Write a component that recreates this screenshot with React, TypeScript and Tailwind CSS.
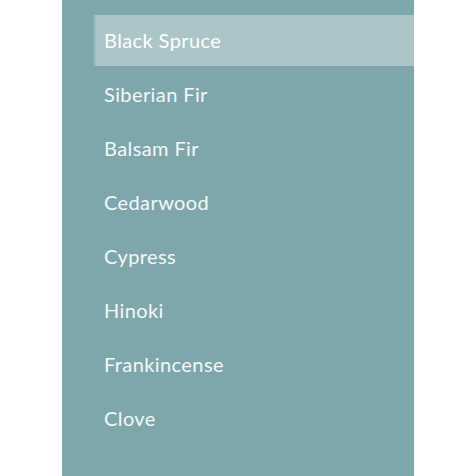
const items = [
  'Black Spruce',
  'Siberian Fir',
  'Balsam Fir',
  'Cedarwood',
  'Cypress',
  'Hinoki',
  'Frankincense',
  'Clove',
];

export default function App() {
  return (
    <div className="flex h-[476px] w-[476px] bg-white">
      <div className="ml-[62px] h-full w-[352px] bg-[#7ea7ac] pt-[15px] pl-[32px]">
        <ul className="flex flex-col gap-[3px]">
          {items.map((name, i) => (
            <li
              key={name}
              className={
                i === 0
                  ? 'flex h-[51px] items-center border-l-2 border-[#9dbcc0] bg-[#abc5c9] pb-[2px] pl-[8px] text-[20px] text-white'
                  : 'flex h-[51px] items-center pb-[2px] pl-[10px] text-[20px] text-[#f4f8f8]'
              }
              style={{ fontFamily: 'Lato, "Open Sans", sans-serif', letterSpacing: '0.4px' }}
            >
              {name}
            </li>
          ))}
        </ul>
      </div>
    </div>
  );
}
